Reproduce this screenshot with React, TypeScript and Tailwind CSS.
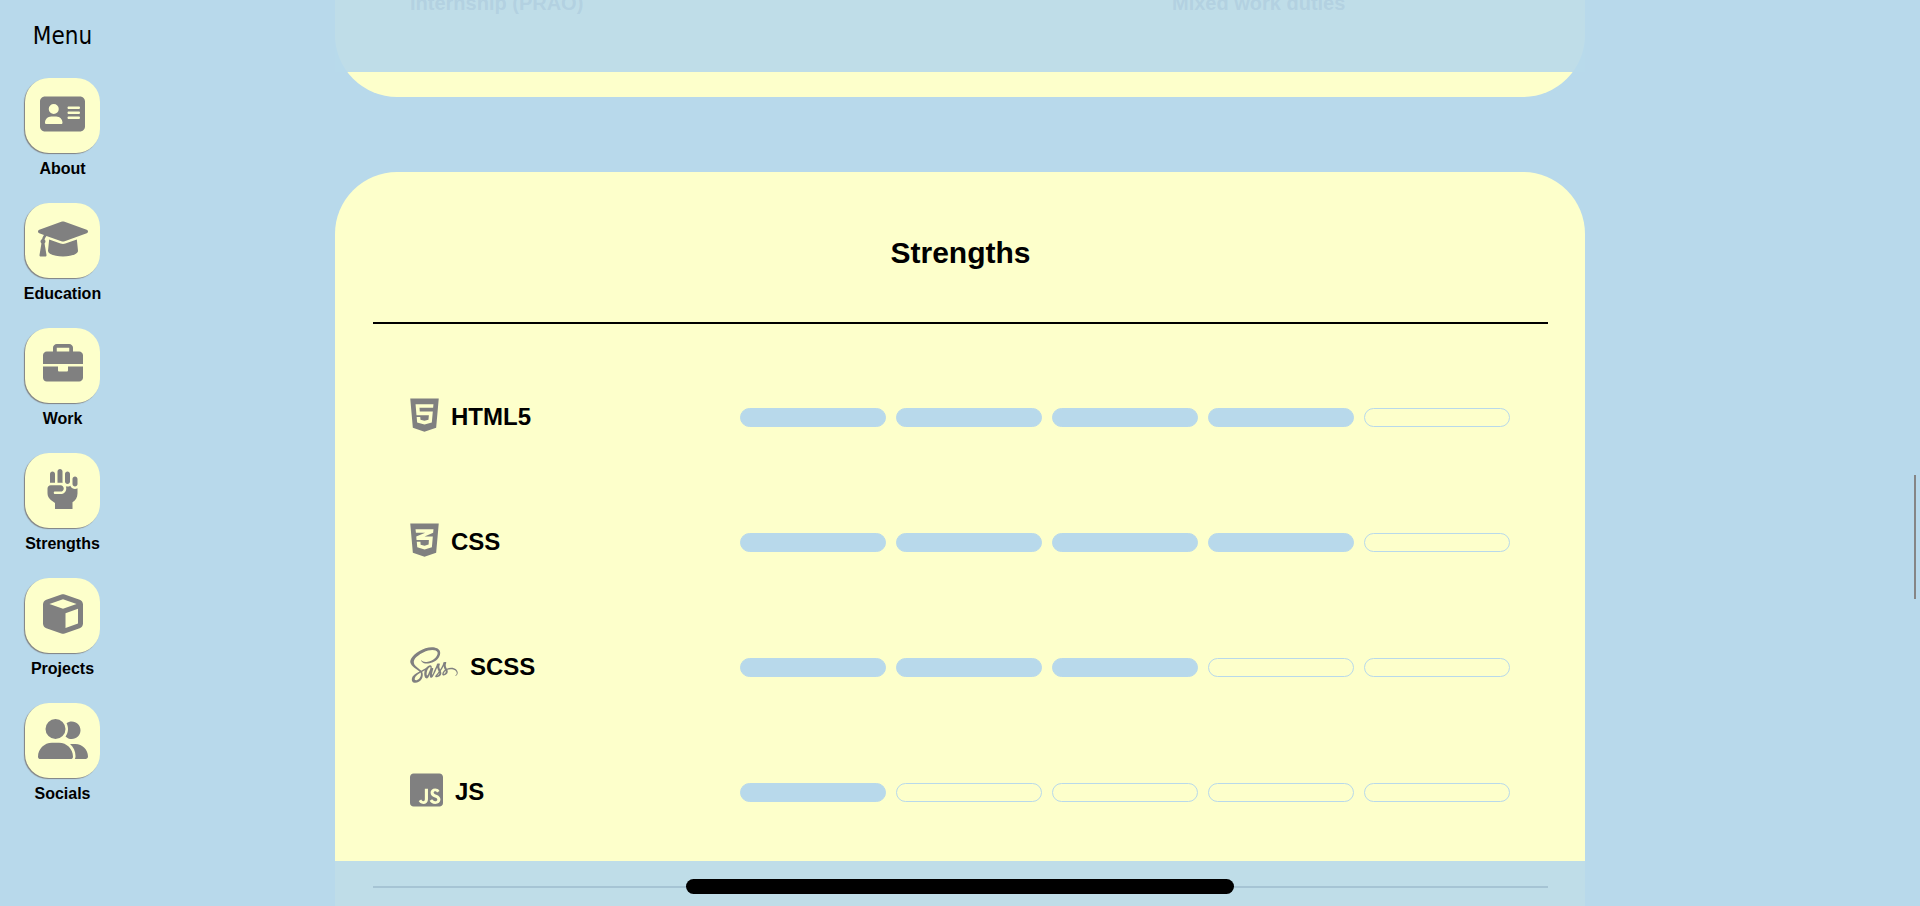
import React from "react";
import { FaCss3Alt, FaHtml5, FaJsSquare, FaSass } from "react-icons/fa";
import { FaAddressCard, FaCube, FaUserGroup } from "react-icons/fa6";

type IconComponent = React.ComponentType<{ className?: string }>;

const GraduationCap: IconComponent = ({ className }) => (
  <svg viewBox="0 0 640 512" fill="currentColor" aria-hidden="true" className={className}>
    <path d="M623.1 136.9l-282.7-101.2c-13.73-4.91-28.7-4.91-42.52 0L16.05 136.9C6.438 140.4 0 149.6 0 160s6.438 19.65 16.05 23.09L76.07 204.6c-11.89 15.8-20.26 34.16-24.55 53.95C40.05 263.4 32 274.8 32 288c0 9.953 4.814 18.49 11.94 24.36l-24.83 149C17.48 471.1 25 480 34.89 480H93.11c9.887 0 17.41-8.879 15.78-18.63l-24.83-149C91.19 306.5 96 297.1 96 288c0-10.29-5.174-19.03-12.72-24.89c4.252-17.76 12.88-33.82 24.94-47.03l190.6 68.23c13.73 4.91 28.7 4.91 42.52 0l282.7-101.2C633.6 179.6 640 170.4 640 160S633.6 140.4 623.1 136.9zM351.1 314.4C341.7 318.1 330.9 320 320 320c-10.92 0-21.69-1.867-32-5.555L142.8 262.5L128 405.3C128 446.6 213.1 480 320 480c105.1 0 192-33.4 192-74.67l-14.78-142.9L351.1 314.4z" />
  </svg>
);

const Briefcase: IconComponent = ({ className }) => (
  <svg viewBox="0 0 512 512" fill="currentColor" aria-hidden="true" className={className}>
    <path d="M320 336c0 8.844-7.156 16-16 16h-96C199.2 352 192 344.8 192 336V288H0v144C0 457.6 22.41 480 48 480h416c25.59 0 48-22.41 48-48V288h-192V336zM464 96H384V48C384 22.41 361.6 0 336 0h-160C150.4 0 128 22.41 128 48V96H48C22.41 96 0 118.4 0 144V256h512V144C512 118.4 489.6 96 464 96zM336 96h-160V48h160V96z" />
  </svg>
);

const RaisedFist: IconComponent = ({ className }) => (
  <svg viewBox="0 0 448 512" fill="currentColor" aria-hidden="true" className={className}>
    <path d="M224 180.4V32c0-17.67-14.31-32-32-32S160 14.33 160 32v144h40C208.5 176 216.5 177.7 224 180.4zM128 176V64c0-17.67-14.31-32-32-32S64 46.33 64 64v112.8C66.66 176.5 69.26 176 72 176H128zM288 192c17.69 0 32-14.33 32-32V64c0-17.67-14.31-32-32-32S256 46.33 256 64v96C256 177.7 270.3 192 288 192zM384 96c-17.69 0-32 14.33-32 32v64c0 17.67 14.31 32 32 32s32-14.33 32-32V128C416 110.3 401.7 96 384 96zM350.9 246.2c-12.43-7.648-21.94-19.31-26.88-33.25C313.7 219.9 301.3 223.9 288 223.9c-7.641 0-14.87-1.502-21.66-3.957C269.1 228.6 272 238.1 272 248c0 39.77-32.25 72-72 72H128c-8.836 0-16-7.164-16-16C112 295.2 119.2 288 128 288h72c22.09 0 40-17.91 40-40S222.1 208 200 208h-128C49.91 208 32 225.9 32 248v63.41c0 33.13 16 64.56 42.81 84.13L128 434.2V512h224v-85.09c38.3-24.09 64-66.4 64-114.9V247.1C406.6 252.6 395.7 256 384 256C372 256 360.5 252.2 350.9 246.2z" />
  </svg>
);

const MENU: { label: string; href: string; Icon: IconComponent; size: string }[] = [
  { label: "About", href: "#about", Icon: FaAddressCard, size: "h-10 w-[45px]" },
  { label: "Education", href: "#education", Icon: GraduationCap, size: "h-10 w-[50px]" },
  { label: "Work", href: "#work", Icon: Briefcase, size: "h-10 w-10" },
  { label: "Strengths", href: "#strengths", Icon: RaisedFist, size: "h-10 w-[35px]" },
  { label: "Projects", href: "#projects", Icon: FaCube, size: "h-10 w-10" },
  { label: "Socials", href: "#socials", Icon: FaUserGroup, size: "h-10 w-[50px]" },
];

const SKILLS: { name: string; level: number; Icon: IconComponent; size: string }[] = [
  { name: "HTML5", level: 4, Icon: FaHtml5, size: "h-[38px] w-[29px]" },
  { name: "CSS", level: 4, Icon: FaCss3Alt, size: "h-[38px] w-[29px]" },
  { name: "SCSS", level: 3, Icon: FaSass, size: "h-[38px] w-12" },
  { name: "JS", level: 1, Icon: FaJsSquare, size: "h-[38px] w-[33px]" },
];

function Sidebar() {
  return (
    <nav aria-label="Menu" className="flex flex-col items-center pt-5">
      <h2 className="mb-[26px] font-['DejaVu_Sans_Condensed','DejaVu_Sans',sans-serif] text-2xl leading-8">
        Menu
      </h2>
      <ul className="flex flex-col gap-[22px]">
        {MENU.map(({ label, href, Icon, size }) => (
          <li key={label}>
            <a href={href} className="flex flex-col items-center gap-1 text-base font-bold leading-6">
              <span className="flex h-[75px] w-[75px] items-center justify-center rounded-3xl bg-[#fdffcb] pb-1 text-[#808080] shadow-[-1px_1px_1px_#808080]">
                <Icon className={size} />
              </span>
              {label}
            </a>
          </li>
        ))}
      </ul>
    </nav>
  );
}

function SkillRow({ name, level, Icon, size }: (typeof SKILLS)[number]) {
  return (
    <li className="flex h-[125px] items-center">
      <div className="flex w-[30%] items-center gap-3 pb-0.5">
        <Icon className={`${size} mb-[3px] shrink-0 text-[#808080]`} />
        <h3 className="text-2xl font-bold">{name}</h3>
      </div>
      <div role="img" aria-label={`${level} / 5`} className="grid flex-1 grid-cols-5 gap-[10px]">
        {[1, 2, 3, 4, 5].map((step) => (
          <span
            key={step}
            className={`h-[19px] rounded-full border border-[#b8d9eb] ${step <= level ? "bg-[#b8d9eb]" : ""}`}
          />
        ))}
      </div>
    </li>
  );
}

export default function App() {
  return (
    <div className="relative grid h-screen grid-cols-[125px_minmax(0,1fr)_125px] overflow-hidden bg-[#b8d9eb] font-['Liberation_Sans',Arial,sans-serif] text-black">
      <Sidebar />

      <main className="relative mx-auto flex h-screen w-full max-w-[1250px] flex-col gap-[75px] overflow-hidden">
        <section
          id="work"
          className="-mt-20 flex h-[177px] shrink-0 items-start justify-between rounded-b-[62px] bg-[#fdffcb] px-[75px] pt-[71px] text-xl font-bold leading-6 text-[#808080]"
        >
          <p>Internship (PRAO)</p>
          <p className="w-[338px]">Mixed work duties</p>
        </section>

        <section id="strengths" className="flex-1 rounded-t-[62px] bg-[#fdffcb] pl-[38px] pr-[37px]">
          <header className="flex h-[152px] items-center justify-center border-b-2 border-black pt-3">
            <h2 className="text-3xl font-bold">Strengths</h2>
          </header>
          <ul className="border-b-2 border-black pb-[31px] pl-[37px] pr-[38px] pt-[31px]">
            {SKILLS.map((skill) => (
              <SkillRow key={skill.name} {...skill} />
            ))}
          </ul>
        </section>

        <div className="pointer-events-none absolute inset-x-0 top-0 h-[72px] bg-[#b8d9eb]/90" />
        <div className="absolute inset-x-0 bottom-0 flex h-[45px] items-center justify-center bg-[#b8d9eb]/90 pt-1.5">
          <button type="button" aria-label="Open" className="h-[15px] w-[548px] rounded-full bg-black" />
        </div>
      </main>

      <div className="absolute right-1 top-[475px] h-[124px] w-0.5 bg-[#858585]" />
    </div>
  );
}
